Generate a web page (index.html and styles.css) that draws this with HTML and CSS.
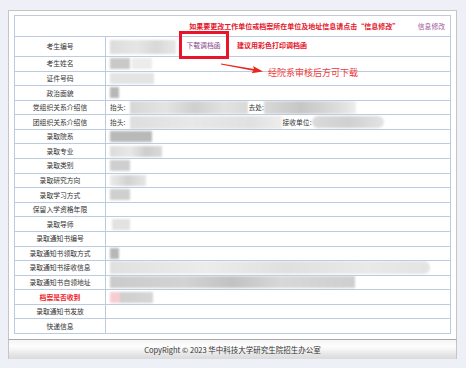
FILE: index.html
```html
<!DOCTYPE html>
<html lang="zh-CN">
<head>
    <meta charset="UTF-8">
    <meta name="viewport" content="width=device-width, initial-scale=1.0">
    <title>录取信息</title>
    <link rel="stylesheet" href="styles.css">
</head>
<body>
    <div class="page">
        <div class="panel">
            <table class="info">
                <colgroup>
                    <col class="col-label">
                    <col>
                </colgroup>
                <tr class="head">
                    <td colspan="2">
                        <span class="notice">如果要更改工作单位或档案所在单位及地址信息请点击“信息修改”</span>
                        <a class="edit-link">信息修改</a>
                    </td>
                </tr>
                <tr class="first">
                    <td class="label">考生编号</td>
                    <td class="value">
                        <span class="blur b-id"></span>
                        <a class="download">下载调档函</a>
                        <span class="tip">建议用彩色打印调档函</span>
                    </td>
                </tr>
                <tr><td class="label">考生姓名</td><td class="value"><span class="blur b-name"></span></td></tr>
                <tr><td class="label">证件号码</td><td class="value"><span class="blur b-card"></span></td></tr>
                <tr><td class="label">政治面貌</td><td class="value"><span class="blur b-small"></span></td></tr>
                <tr>
                    <td class="label">党组织关系介绍信</td>
                    <td class="value">
                        <span class="field">抬头:</span><span class="blur b-party"></span><span class="field">去处:</span><span class="blur b-party2"></span>
                    </td>
                </tr>
                <tr>
                    <td class="label">团组织关系介绍信</td>
                    <td class="value">
                        <span class="field">抬头:</span><span class="blur b-league"></span><span class="field">接收单位:</span><span class="blur b-league2"></span>
                    </td>
                </tr>
                <tr><td class="label">录取院系</td><td class="value"><span class="blur b-dept"></span></td></tr>
                <tr><td class="label">录取专业</td><td class="value"><span class="blur b-major"></span></td></tr>
                <tr><td class="label">录取类别</td><td class="value"><span class="blur b-type"></span></td></tr>
                <tr><td class="label">录取研究方向</td><td class="value"><span class="blur b-dir"></span></td></tr>
                <tr><td class="label">录取学习方式</td><td class="value"><span class="blur b-type"></span></td></tr>
                <tr><td class="label">保留入学资格年限</td><td class="value"></td></tr>
                <tr><td class="label">录取导师</td><td class="value"><span class="blur b-tutor"></span></td></tr>
                <tr><td class="label">录取通知书编号</td><td class="value"></td></tr>
                <tr><td class="label">录取通知书领取方式</td><td class="value"><span class="blur b-small"></span></td></tr>
                <tr><td class="label">录取通知书接收信息</td><td class="value"><span class="blur b-recv"></span></td></tr>
                <tr><td class="label">录取通知书自领地址</td><td class="value"><span class="blur b-addr"></span></td></tr>
                <tr><td class="label red">档案是否收到</td><td class="value"><span class="blur b-file"></span></td></tr>
                <tr><td class="label">录取通知书发放</td><td class="value"></td></tr>
                <tr><td class="label">快递信息</td><td class="value"></td></tr>
            </table>

            <!-- annotation drawn on top of the screenshot -->
            <svg class="arrow" width="44" height="12" viewBox="0 0 44 12">
                <polygon points="0,0.4 33,5.9 32,3 42,8.6 30.5,10.2 32.4,7.8 0,1.6" fill="#e8261f"/>
            </svg>
            <span class="arrow-text">经院系审核后方可下载</span>
        </div>
        <div class="footer">CopyRight © 2023 华中科技大学研究生院招生办公室</div>
    </div>
</body>
</html>
```

FILE: styles.css
```css
body {
    margin: 0;
    background-color: #edf1f7;
    font-family: "Noto Sans CJK SC", "Liberation Sans", sans-serif;
    color: #333;
}

.page {
    padding: 10px 10px 9px 8px;
}

.panel {
    position: relative;
    width: 442px;
    background-color: #fff;
    border: 1px solid #c5c5c5;
    border-bottom: none;
    padding: 4px 0 5px 5px;
}

/* Info table */
.info {
    width: 437px;
    border-collapse: collapse;
    table-layout: fixed;
    font-size: 6.8px;
}

.col-label {
    width: 91px;
}

.info td {
    border: 1px solid #bccbdd;
    padding: 0;
    line-height: 1;
    white-space: nowrap;
    overflow: hidden;
}

.info tr {
    height: 14.58px;
}

.info tr.head {
    height: 21px;
}

.info tr.first {
    height: 20px;
}

.info tr.first td {
    overflow: visible;
}

.head td {
    text-align: right;
    padding-right: 5px;
}

.notice {
    color: #e3152b;
    font-weight: bold;
    font-size: 7px;
    margin-right: 17px;
}

.edit-link {
    color: #a0569c;
    font-size: 6.8px;
}

.label {
    text-align: center;
}

.label.red {
    color: #ee1c2a;
    font-weight: bold;
}

.info td.value {
    padding-left: 4px;
}

.download {
    color: #86448a;
    margin-left: 4px;
    padding: 6px 5px;
    outline: 3px solid #e8142b;
}

.tip {
    color: #e3152b;
    font-weight: bold;
    font-size: 7px;
    margin-left: 10px;
}

.field {
    display: inline-block;
    vertical-align: middle;
    background: #fff;
    position: relative;
}

/* Blurred (masked) personal data */
.blur {
    display: inline-block;
    vertical-align: middle;
    height: 11px;
    filter: blur(1.2px);
    background: linear-gradient(90deg, #d6d6d6, #e4e4e4 30%, #cfcfcf 55%, #e2e2e2 80%, #d9d9d9);
}

.b-id { width: 66px; height: 14px; background: linear-gradient(90deg, #dcdcdc, #e6e6e6 40%, #d8d8d8 70%, #e8e8e8); }
.b-name { width: 20px; background: #c9c9c9; box-shadow: 22px 0 0 #ececec; }
.b-card { width: 44px; background: #e4e4e4; }
.b-small { width: 9px; background: #b7b7b7; }
.b-party { width: 118px; height: 13px; margin-left: 5px; }
.b-party2 { width: 92px; height: 13px; background: linear-gradient(90deg, #d8d8d8, #c6c6c6 40%, #dcdcdc 80%, #eee); }
.b-league { width: 152px; height: 13px; margin-left: 5px; background: linear-gradient(90deg, #dedede, #e8e8e8 40%, #e1e1e1 80%, #ededed); }
.b-league2 { width: 72px; height: 12px; border-radius: 6px; background: linear-gradient(90deg, #dadada, #d0d0d0 50%, #e3e3e3); }
.b-dept { width: 42px; background: #b9b9b9; }
.b-major { width: 52px; background: linear-gradient(90deg, #dcdcdc, #e8e8e8 40%, #cdcdcd 70%, #dadada); }
.b-type { width: 20px; background: #cfcfcf; }
.b-dir { width: 36px; background: linear-gradient(90deg, #ececec, #d2d2d2 50%, #e6e6e6); }
.b-tutor { width: 18px; margin-left: 2px; background: #e2e2e2; }
.b-recv { width: 320px; height: 13px; border-radius: 0 6px 6px 0; background: linear-gradient(90deg, #e0e0e0, #ececec 30%, #e0e0e0 55%, #e9e9e9 80%, #e4e4e4); }
.b-addr { width: 245px; height: 12px; background: linear-gradient(90deg, #cbcbcb, #d3d3d3 30%, #c2c2c2 50%, #d8d8d8 70%, #cfcfcf); }
.b-file { width: 43px; background: linear-gradient(90deg, #f6cdd3 0, #f6cdd3 24%, #cfcfcf 24%, #d6d6d6); }

/* Red annotation */
.arrow {
    position: absolute;
    left: 212px;
    top: 52px;
}

.arrow-text {
    position: absolute;
    left: 259px;
    top: 57px;
    color: #ef3a3a;
    font-size: 9px;
    line-height: 1;
}

/* Footer */
.footer {
    width: 447px;
    height: 19px;
    line-height: 19px;
    border: 1px solid #c5c5c5;
    border-top-color: #a8a8a8;
    border-bottom: none;
    background: linear-gradient(#f6f6f6, #fdfdfd 35%, #e3e3e3 80%, #dadada);
    text-align: center;
    font-size: 7.5px;
    color: #333;
}
```
